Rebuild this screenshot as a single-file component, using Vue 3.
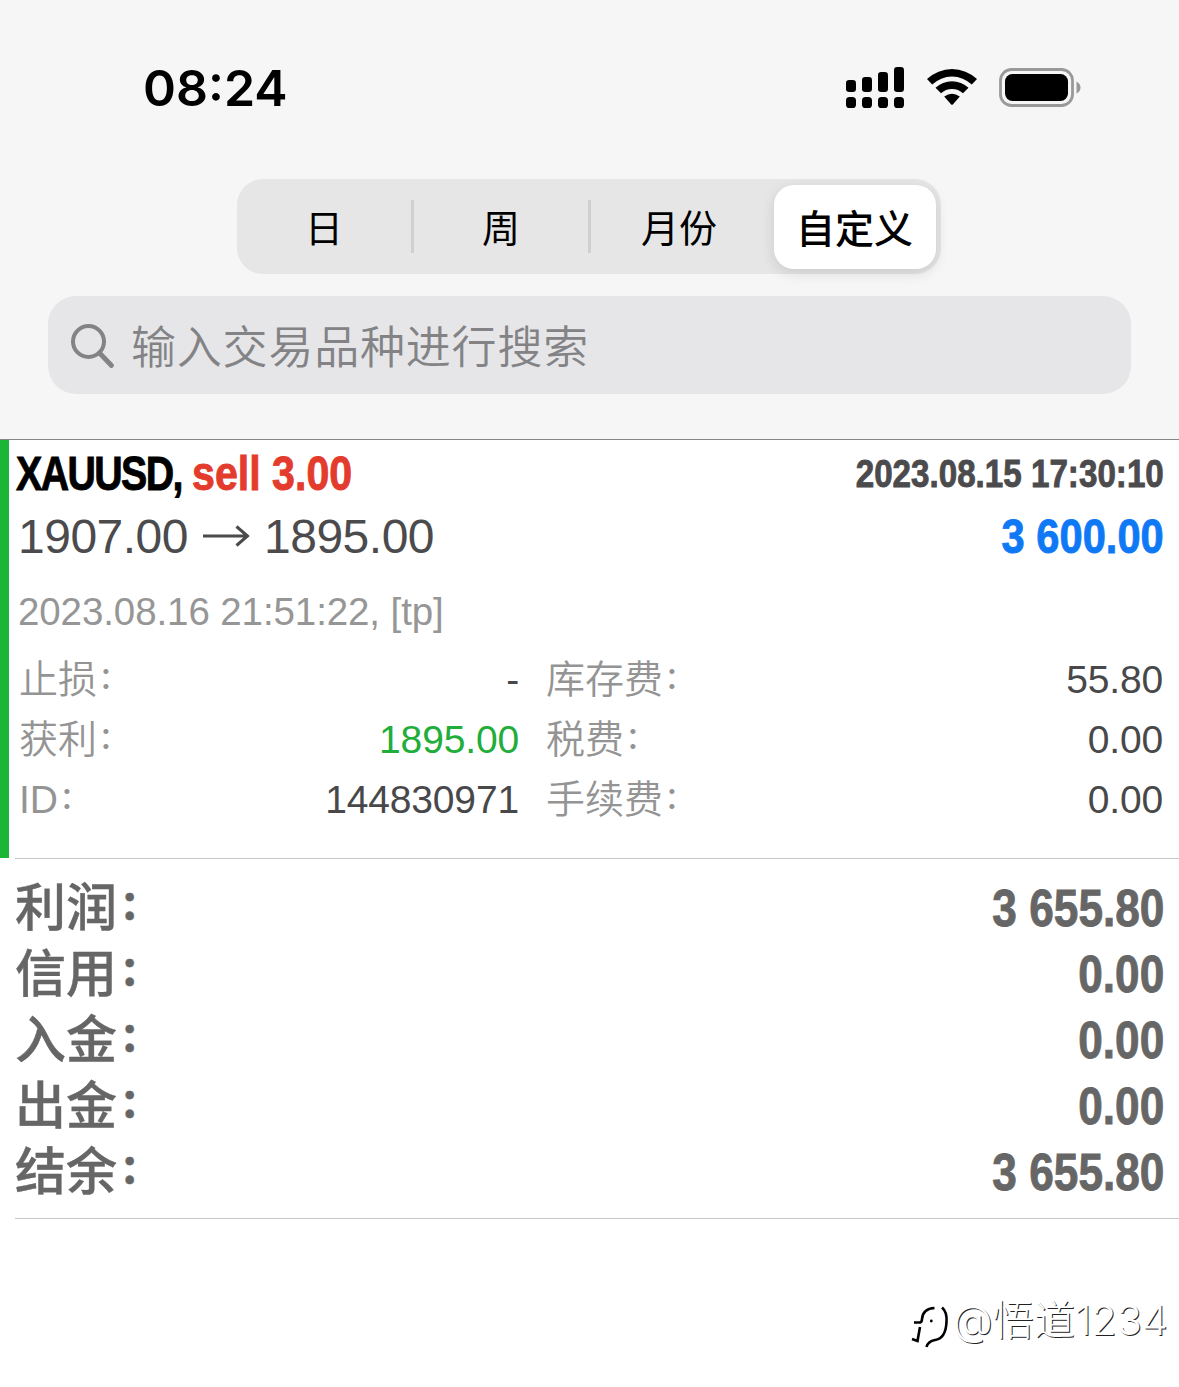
<template>
  <div class="page">
    <header class="top">
      <div class="status-bar">
        <span class="time">08:24</span>
        <div class="status-icons">
          <svg class="signal" viewBox="0 0 58 42">
            <rect v-for="bar in bars" :key="bar.x" :x="bar.x" :y="bar.y" width="10" :height="25 - bar.y" rx="3.2" />
            <rect v-for="bar in bars" :key="'d' + bar.x" :x="bar.x" y="30" width="10" height="11" rx="3.6" />
          </svg>
          <svg class="wifi" viewBox="0 0 52 38">
            <path d="M1 11 A36.5 36.5 0 0 1 51 11 L45.8 16.6 A28.5 28.5 0 0 0 6.2 16.6 Z" />
            <path d="M9.5 19.8 A24 24 0 0 1 42.5 19.8 L37 25.3 A16 16 0 0 0 15 25.3 Z" />
            <path d="M18.2 28.6 Q26 23 33.8 28.6 L27 36.2 Q26 37.2 25 36.2 Z" />
          </svg>
          <svg class="battery" viewBox="0 0 83 40">
            <rect x="1.5" y="1.5" width="72" height="36" rx="11" class="battery-case" />
            <rect x="6" y="6" width="63" height="27" rx="7.5" />
            <path d="M77.5 13.5 Q81.5 15.5 81.5 19.5 T77.5 25.5 Z" class="battery-tip" />
          </svg>
        </div>
      </div>

      <div class="tabs">
        <button
          v-for="(tab, index) in tabs"
          :key="tab"
          class="tab"
          :class="{ active: state.tab === index }"
          @click="state.tab = index"
        >{{ tab }}</button>
      </div>

      <div class="search">
        <svg class="search-icon" viewBox="0 0 46 46">
          <circle cx="18.5" cy="18.5" r="15.5" />
          <path d="M29.5 30 L41.5 42.5" class="handle" />
        </svg>
        <span>输入交易品种进行搜索</span>
      </div>
    </header>

    <section class="deal">
      <div class="deal-title">
        <span class="condensed symbol">XAUUSD,</span>
        <span class="condensed sell">sell 3.00</span>
        <span class="condensed right open-time">2023.08.15 17:30:10</span>
      </div>
      <div class="deal-price">
        <span>1907.00</span>
        <svg class="arrow" viewBox="0 0 48 24"><path d="M1 12 H45 M34.5 2.5 L45.5 12 L34.5 21.5" /></svg>
        <span>1895.00</span>
        <span class="condensed right profit">3 600.00</span>
      </div>
      <div class="close-time">2023.08.16 21:51:22, [tp]</div>
      <div class="details">
        <template v-for="row in details" :key="row.label">
          <span class="label">{{ row.label }}<span class="colon">：</span></span>
          <span class="value" :class="row.type">{{ row.value }}</span>
        </template>
      </div>
    </section>

    <section class="totals">
      <div v-for="total in totals" :key="total.label" class="total">
        <span class="total-label">{{ total.label }}<span class="colon">：</span></span>
        <span class="condensed right total-value">{{ total.value }}</span>
      </div>
    </section>

    <footer class="watermark">
      <svg class="mark" viewBox="0 0 38 46">
        <path d="M3 19.5 H9 Q11 19 11 16 C11.5 10 15 5.5 23.5 5" class="thick" />
        <path d="M9 24 L6.5 38 L1 36" class="thick" />
        <path d="M31 4.5 C35 8 36 13 35.5 19 C35 29 32 36 24 37 C19 38 16.5 40 15.5 44" class="thick" />
        <circle cx="20.3" cy="18" r="1.4" />
      </svg>
      <span>@悟道1234</span>
    </footer>
  </div>
</template>

<script setup>
import { reactive } from 'vue'

const state = reactive({
  tab: 3,
});

const tabs = ['日', '周', '月份', '自定义'];

const bars = [
  { x: 0, y: 13 },
  { x: 16, y: 10 },
  { x: 32, y: 5 },
  { x: 48, y: 0 },
];

const details = [
  { label: '止损', value: '-' },
  { label: '库存费', value: '55.80' },
  { label: '获利', value: '1895.00', type: 'green' },
  { label: '税费', value: '0.00' },
  { label: 'ID', value: '144830971' },
  { label: '手续费', value: '0.00' },
];

const totals = [
  { label: '利润', value: '3 655.80' },
  { label: '信用', value: '0.00' },
  { label: '入金', value: '0.00' },
  { label: '出金', value: '0.00' },
  { label: '结余', value: '3 655.80' },
];
</script>

<style>
body {
  background: #fff;
}
</style>

<style scoped>
.page {
  width: 1179px;
  height: 1387px;
  overflow: hidden;
  background: #fff;
  font-family: "Liberation Sans", "Noto Sans CJK SC", sans-serif;
}

.top {
  box-sizing: border-box;
  height: 440px;
  background: #f6f6f6;
  border-bottom: 1px solid #858585;
}

.status-bar {
  display: flex;
  justify-content: space-between;
  height: 179px;
  padding: 0 97px 0 143px;
}

.time {
  font-family: Inter, sans-serif;
  font-size: 50px;
  font-weight: 600;
  line-height: 60px;
  margin-top: 58px;
}

.status-icons {
  display: flex;
  margin-top: 67px;
}

.signal {
  width: 58px;
  height: 42px;
}

.wifi {
  width: 52px;
  height: 38px;
  margin: 1px 0 0 22px;
}

.battery {
  width: 83px;
  height: 40px;
  margin: 1px 0 0 21px;
}

.battery-case {
  fill: none;
  stroke: #999;
  stroke-width: 2.8;
}

.battery-tip {
  fill: #999;
}

.tabs {
  box-sizing: border-box;
  display: grid;
  grid-template-columns: 177px 177px 176px 169px;
  width: 704px;
  height: 95px;
  margin-left: 237px;
  padding: 6px 5px 5px 0;
  background: #e6e6e6;
  border-radius: 26px;
}

.tab {
  display: flex;
  align-items: center;
  justify-content: center;
  margin: 15px 0 16px;
  padding: 0 0 2px;
  border: none;
  background: none;
  font-family: "Noto Sans CJK SC", sans-serif;
  font-size: 38px;
  line-height: 49px;
  color: #000;
}

.tab:nth-child(-n + 2) {
  border-right: 3px solid #d0d0d0;
}

.tab.active {
  margin: 0 0 0 7px;
  padding: 0 1px 2px 0;
  border-radius: 20px;
  background: #fff;
  font-size: 39px;
  font-weight: 500;
  box-shadow: 0 4px 14px rgba(0, 0, 0, 0.12);
}

.search {
  box-sizing: border-box;
  display: flex;
  align-items: center;
  width: 1083px;
  height: 98px;
  margin: 22px 0 0 48px;
  padding: 0 0 1px 22px;
  border-radius: 28px;
  background: #e6e6e8;
  color: #838386;
  font-family: "Noto Sans CJK SC", sans-serif;
  font-size: 45px;
  font-weight: 350;
  letter-spacing: 0.8px;
}

.search-icon {
  width: 46px;
  height: 46px;
  margin: 2px 15px 0 0;
  fill: none;
  stroke: #838386;
  stroke-width: 4;
  stroke-linecap: round;
}

.handle {
  stroke-width: 4.8;
}

.deal {
  box-sizing: border-box;
  height: 418px;
  padding-right: 15px;
  border-left: 9px solid #1bb635;
}

.deal-title,
.deal-price {
  display: flex;
  align-items: center;
}

.condensed {
  font-weight: bold;
  white-space: nowrap;
  transform: scaleX(0.84);
  transform-origin: left;
  -webkit-text-stroke: 0.9px currentColor;
}

.condensed.right {
  margin-left: auto;
  transform-origin: right;
}

.deal-title {
  height: 66px;
  padding-left: 7px;
}

.symbol {
  width: 176px;
  font-size: 49px;
  letter-spacing: -2px;
  transform: scaleX(0.803);
}

.sell {
  color: #e33b2c;
  font-size: 49px;
}

.open-time {
  font-size: 39.5px;
  color: #4b4b4d;
}

.deal-price {
  height: 60px;
  padding-left: 9px;
  color: #4b4b4d;
  font-size: 48px;
  letter-spacing: -0.5px;
}

.arrow {
  width: 48px;
  height: 24px;
  margin: 0 14px;
  fill: none;
  stroke: #4b4b4d;
  stroke-width: 3;
}

.deal-price .profit {
  color: #0f79f5;
  font-size: 49px;
  letter-spacing: 0;
  transform: scaleX(0.85);
}

.close-time {
  padding: 16px 0 8px 9px;
  line-height: 60px;
  font-size: 38.5px;
  letter-spacing: -0.1px;
  color: #969696;
}

.details {
  display: grid;
  grid-template-columns: 140px 360px 160px 484px;
  grid-auto-rows: 60px;
  padding-left: 10px;
  line-height: 60px;
  font-size: 39px;
}

.label {
  height: 60px;
  color: #949494;
  font-weight: 350;
  line-height: 60px;
  white-space: nowrap;
}

.label:nth-child(4n + 3) {
  padding-left: 27px;
}

.colon {
  margin-left: 0.05em;
  font-family: "Noto Sans CJK SC", sans-serif;
  font-size: 0.76em;
  font-weight: 500;
  line-height: 1;
  vertical-align: 0.17em;
}

.value {
  color: #48484a;
  letter-spacing: -0.15px;
  text-align: right;
}

.value.green {
  color: #21ad39;
}

.totals {
  box-sizing: border-box;
  height: 361px;
  margin-left: 15px;
  padding: 16px 15px 0 0;
  border-top: 1px solid #c5c5c7;
  border-bottom: 1px solid #c5c5c7;
}

.total {
  display: flex;
  justify-content: space-between;
  height: 66px;
  line-height: 66px;
  color: #666;
}

.total-label {
  font-family: "Noto Sans CJK SC", sans-serif;
  font-size: 51px;
  font-weight: 500;
  line-height: 58px;
  -webkit-text-stroke: 0.4px currentColor;
}

.total-label .colon {
  margin-left: 0.08em;
  font-weight: 900;
}

.total-value {
  font-size: 52px;
}

.total .total-value {
  transform: scaleX(0.85);
}

.watermark {
  display: flex;
  justify-content: flex-end;
  padding: 81px 11px 0 0;
  font-family: Inter, "Noto Sans CJK SC", sans-serif;
  font-size: 41px;
  font-weight: 300;
  line-height: 40px;
  letter-spacing: 0.2px;
  color: #fff;
  text-shadow: 1px 1px 0 #222;
}

.mark {
  width: 38px;
  height: 46px;
  margin: 3px 4px 0 0;
}

.mark .thick {
  fill: none;
  stroke: #000;
  stroke-width: 2.6;
}
</style>
